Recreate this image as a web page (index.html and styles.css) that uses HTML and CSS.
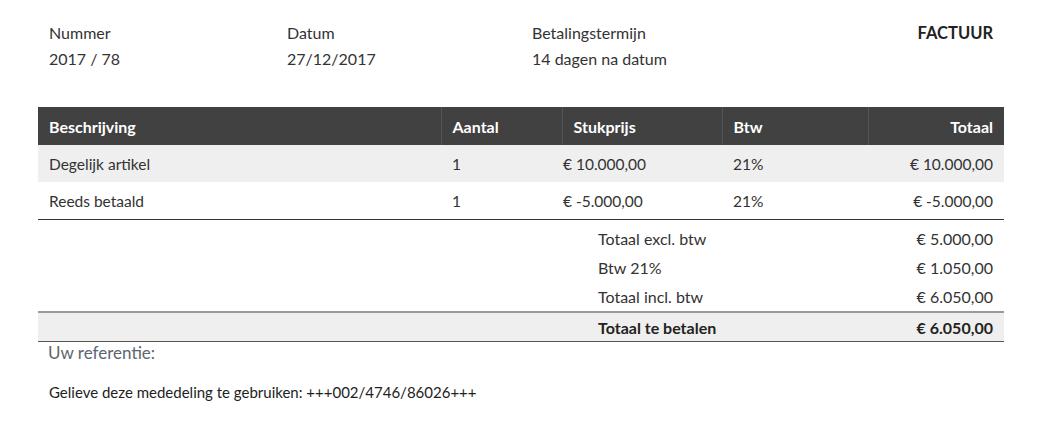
FILE: index.html
```html
<!DOCTYPE html>
<html lang="nl">
<head>
    <meta charset="UTF-8">
    <title>Factuur</title>
    <link rel="stylesheet" href="styles.css">
</head>
<body>
    <div class="invoice">
        <div class="meta">
            <div class="meta-item meta-nr">
                <div>Nummer</div>
                <div>2017 / 78</div>
            </div>
            <div class="meta-item meta-date">
                <div>Datum</div>
                <div>27/12/2017</div>
            </div>
            <div class="meta-item meta-term">
                <div>Betalingstermijn</div>
                <div>14 dagen na datum</div>
            </div>
            <div class="meta-title">FACTUUR</div>
        </div>

        <table class="lines">
            <colgroup>
                <col class="c-desc">
                <col class="c-qty">
                <col class="c-price">
                <col class="c-vat">
                <col class="c-total">
            </colgroup>
            <thead>
                <tr>
                    <th>Beschrijving</th>
                    <th>Aantal</th>
                    <th>Stukprijs</th>
                    <th>Btw</th>
                    <th class="num">Totaal</th>
                </tr>
            </thead>
            <tbody>
                <tr class="shade">
                    <td>Degelijk artikel</td>
                    <td>1</td>
                    <td class="price">€ 10.000,00</td>
                    <td>21%</td>
                    <td class="num">€ 10.000,00</td>
                </tr>
                <tr class="last">
                    <td>Reeds betaald</td>
                    <td>1</td>
                    <td class="price">€ -5.000,00</td>
                    <td>21%</td>
                    <td class="num">€ -5.000,00</td>
                </tr>
            </tbody>
        </table>

        <div class="sums">
            <div class="sum-row"><span>Totaal excl. btw</span><span>€ 5.000,00</span></div>
            <div class="sum-row"><span>Btw 21%</span><span>€ 1.050,00</span></div>
            <div class="sum-row"><span>Totaal incl. btw</span><span>€ 6.050,00</span></div>
        </div>
        <div class="grand">
            <div class="sum-row"><span>Totaal te betalen</span><span>€ 6.050,00</span></div>
        </div>

        <div class="ref">Uw referentie:</div>
        <div class="note">Gelieve deze mededeling te gebruiken: +++002/4746/86026+++</div>
    </div>
</body>
</html>
```

FILE: styles.css
```css
body {
    margin: 0;
    padding: 0 40px 0 38px;
    font-family: Lato, "Open Sans", sans-serif;
    font-size: 15.5px;
    color: #333;
    background: #fff;
}

.invoice {
    width: 966px;
}

.meta {
    display: flex;
    padding: 20px 11px 0 11px;
    height: 107px;
    box-sizing: border-box;
    line-height: 26px;
    font-size: 16px;
}

.meta-nr {
    width: 238px;
}

.meta-date {
    width: 245px;
}

.meta-term {
    flex: 1;
}

.meta-title {
    font-size: 16.5px;
    font-weight: bold;
    color: #222;
}

.lines {
    width: 100%;
    border-collapse: collapse;
    table-layout: fixed;
}

.c-desc { width: 403px; }
.c-qty { width: 121px; }
.c-price { width: 160px; }
.c-vat { width: 146px; }

.lines th {
    background-color: #414141;
    color: #fff;
    font-size: 16px;
    font-weight: bold;
    text-align: left;
    height: 38px;
    padding: 0 11px;
    border-left: 1px solid #555;
}

.lines th:first-child {
    border-left: none;
}

.lines td {
    height: 37px;
    padding: 0 11px;
}

.lines td.price {
    padding-left: 1px;
}

.lines .shade td {
    background-color: #efefef;
}

.lines .last td {
    border-bottom: 1px solid #333;
}

.lines .num {
    text-align: right;
}

.sums {
    padding-top: 4px;
    font-size: 16px;
}

.sum-row {
    display: flex;
    justify-content: space-between;
    margin-left: 560px;
    padding-right: 11px;
    height: 29px;
    align-items: center;
}

.grand {
    background-color: #efefef;
    border-top: 2px solid #9a9a9a;
    border-bottom: 1px solid #555;
    font-size: 16px;
    font-weight: bold;
    color: #222;
}

.grand .sum-row {
    height: 28px;
}

.ref {
    padding: 0 10px;
    font-size: 17px;
    color: #5c6670;
}

.note {
    padding: 20px 11px 0;
    font-size: 15px;
    color: #222;
}
```
